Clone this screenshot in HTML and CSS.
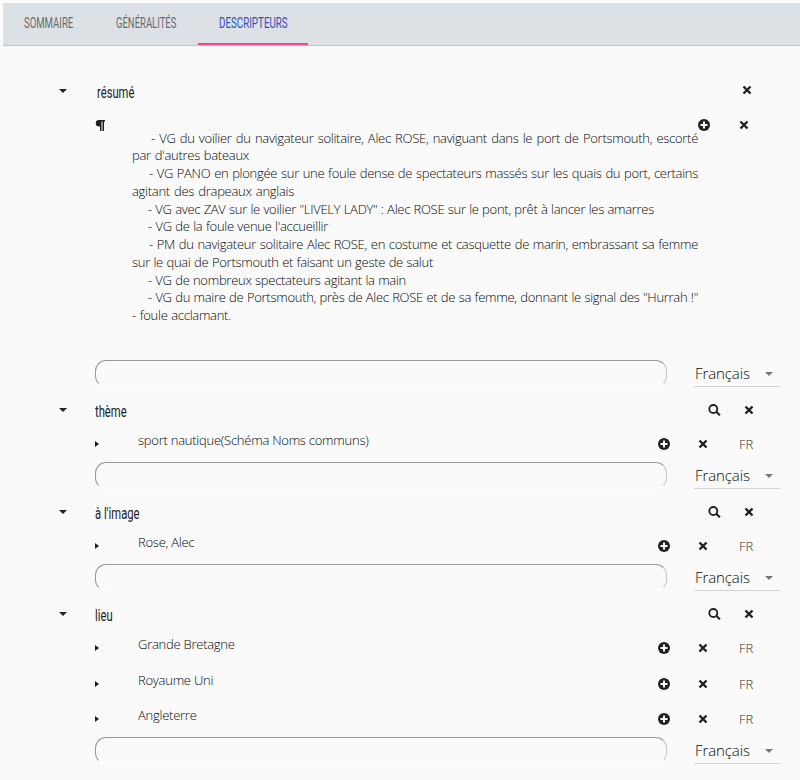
FILE: index.html
```
<!DOCTYPE html>
<html lang="fr">
<head>
<meta charset="utf-8">
<title>Descripteurs</title>
<link rel="stylesheet" href="styles.css">
</head>
<body>
<svg class="defs" aria-hidden="true">
  <symbol id="close" viewBox="0 0 10 10"><path d="M1.500 1.500l7 7M8.500 1.500l-7 7" fill="none" stroke="#212121" stroke-width="2.400"/></symbol>
  <symbol id="plus" viewBox="0 0 12 12"><circle cx="6" cy="6" r="6" fill="#212121"/><path d="M6 2.500v7M2.500 6h7" stroke="#fafafa" stroke-width="2"/></symbol>
  <symbol id="search" viewBox="0 0 13 12"><circle cx="5.300" cy="5" r="4" fill="none" stroke="#212121" stroke-width="1.800"/><path d="M8.200 7.800l3.700 3.400" stroke="#212121" stroke-width="2.200"/></symbol>
  <symbol id="down" viewBox="0 0 8 4"><path d="M0 0h8L4 4z"/></symbol>
  <symbol id="right" viewBox="0 0 4 6"><path d="M0 0l4 3-4 3z"/></symbol>
</svg>
<nav class="tabs">
  <a class="tab first"><span class="c1">SOMMAIRE</span></a>
  <a class="tab second"><span class="c2">GÉNÉRALITÉS</span></a>
  <a class="tab active"><span class="c3">DESCRIPTEURS</span></a>
</nav>
<main>
  <section>
    <div class="head head-top">
      <svg class="down"><use href="#down"/></svg><h2>résumé</h2><span></span><svg class="close"><use href="#close"/></svg>
    </div>
    <div class="note">
      <svg class="pilcrow" viewBox="0 0 10 11"><path d="M4 0h6v1.500H9V11H7.500V1.500H6.500V11H5V6.500H4A3.250 3.250 0 0 1 4 0z" fill="#212121"/></svg>
      <div class="lines">
        <p class="l1">- VG du voilier du navigateur solitaire, Alec ROSE, naviguant dans le port de Portsmouth, escorté</p>
        <p class="l2">par d'autres bateaux</p>
        <p class="l3">- VG PANO en plongée sur une foule dense de spectateurs massés sur les quais du port, certains</p>
        <p class="l4">agitant des drapeaux anglais</p>
        <p class="l5">- VG avec ZAV sur le voilier "LIVELY LADY" : Alec ROSE sur le pont, prêt à lancer les amarres</p>
        <p class="l6">- VG de la foule venue l'accueillir</p>
        <p class="l7">- PM du navigateur solitaire Alec ROSE, en costume et casquette de marin, embrassant sa femme</p>
        <p class="l8">sur le quai de Portsmouth et faisant un geste de salut</p>
        <p class="l9">- VG de nombreux spectateurs agitant la main</p>
        <p class="l10">- VG du maire de Portsmouth, près de Alec ROSE et de sa femme, donnant le signal des "Hurrah !"</p>
        <p class="l11">- foule acclamant.</p>
      </div>
      <svg class="plus"><use href="#plus"/></svg><svg class="close"><use href="#close"/></svg>
    </div>
    <div class="entry"><div class="field"></div><div class="select"><span>Français</span><svg class="down"><use href="#down"/></svg></div></div>
  </section>
  <section>
    <div class="head"><svg class="down"><use href="#down"/></svg><h2>thème</h2><svg class="search"><use href="#search"/></svg><svg class="close"><use href="#close"/></svg></div>
    <div class="item"><svg class="right"><use href="#right"/></svg><p>sport nautique(Schéma Noms communs)</p><svg class="plus"><use href="#plus"/></svg><svg class="close"><use href="#close"/></svg><span class="lang">FR</span></div>
    <div class="entry"><div class="field"></div><div class="select"><span>Français</span><svg class="down"><use href="#down"/></svg></div></div>
  </section>
  <section>
    <div class="head"><svg class="down"><use href="#down"/></svg><h2>à l'image</h2><svg class="search"><use href="#search"/></svg><svg class="close"><use href="#close"/></svg></div>
    <div class="item"><svg class="right"><use href="#right"/></svg><p>Rose, Alec</p><svg class="plus"><use href="#plus"/></svg><svg class="close"><use href="#close"/></svg><span class="lang">FR</span></div>
    <div class="entry"><div class="field"></div><div class="select"><span>Français</span><svg class="down"><use href="#down"/></svg></div></div>
  </section>
  <section>
    <div class="head"><svg class="down"><use href="#down"/></svg><h2>lieu</h2><svg class="search"><use href="#search"/></svg><svg class="close"><use href="#close"/></svg></div>
    <div class="item"><svg class="right"><use href="#right"/></svg><p>Grande Bretagne</p><svg class="plus"><use href="#plus"/></svg><svg class="close"><use href="#close"/></svg><span class="lang">FR</span></div>
    <div class="item"><svg class="right"><use href="#right"/></svg><p>Royaume Uni</p><svg class="plus"><use href="#plus"/></svg><svg class="close"><use href="#close"/></svg><span class="lang">FR</span></div>
    <div class="item"><svg class="right"><use href="#right"/></svg><p>Angleterre</p><svg class="plus"><use href="#plus"/></svg><svg class="close"><use href="#close"/></svg><span class="lang">FR</span></div>
    <div class="entry"><div class="field"></div><div class="select"><span>Français</span><svg class="down"><use href="#down"/></svg></div></div>
  </section>
</main>
</body>
</html>
```
FILE: styles.css
```
* { box-sizing: border-box; }
body { margin: 0; padding: 3px 0 0 3px; height: 780px; overflow: hidden; background: #fafafa; color: #080808; font-family: "Open Sans", sans-serif; font-size: 13px; font-weight: 300; }
.defs { display: none; }
svg { display: block; }
p, h2 { margin: 0; white-space: nowrap; }

.tabs { display: flex; height: 43px; background: #dce1e5; border-bottom: 1px solid #bcc4cb; }
.tab { height: 42px; line-height: 42px; font-size: 14.500px; font-weight: 400; font-family: "Roboto", sans-serif; color: #686c6c; }
.tab span { display: inline-block; transform-origin: left center; white-space: nowrap; }
.first { width: 92px; padding-left: 21px; }
.second { width: 103px; padding-left: 21px; }
.active { width: 110px; padding-left: 21px; color: #354fb8; border-bottom: 2px solid #ff4081; }
.c1 { transform: scaleX(.66); }
.c2 { transform: scaleX(.655); }
.c3 { transform: scaleX(.675); }

main { margin-left: -3px; }
.head { display: grid; grid-template-columns: 36px 613px 35px 10px; height: 39.500px; padding: 7px 0 0 59px; align-items: center; }
.head-top { height: 73px; padding-top: 16px; grid-template-columns: 38px 611px 34px 10px; }
.head .down { width: 8px; height: 4px; fill: #212121; }
.head h2 { justify-self: start; font-family: "Roboto", sans-serif; font-size: 17px; font-weight: 400; line-height: 22px; transform: scaleX(.66); transform-origin: left center; padding-top: 2px; color: #222; }
.close { width: 10px; height: 10px; }
.head .close { margin-left: 1px; }
.head-top .close { margin-left: 0; margin-top: -1px; }
.search { width: 13px; height: 12px; }
.plus { width: 12px; height: 12px; }
.right { width: 4px; height: 6px; fill: #212121; }

.note { display: grid; grid-template-columns: 37px 566px 41px 10px; height: 241px; padding-left: 95px; align-items: start; }
.pilcrow { width: 10px; height: 11px; margin-top: 1px; }
.note .close { margin-top: 1px; }
.lines { padding-top: 10.500px; }
.lines p { height: 17.750px; line-height: 17.750px; text-align-last: justify; letter-spacing: -.28px; }
.l1 { margin-left: 19px; width: 547px; }
.l2 { width: 117px; }
.l3 { margin-left: 17px; width: 549px; }
.l4 { width: 162px; }
.l5 { margin-left: 16px; width: 506px; }
.l6 { margin-left: 16px; width: 180px; }
.l7 { margin-left: 17px; width: 549px; }
.l8 { width: 301px; }
.l9 { margin-left: 16px; width: 258px; }
.l10 { margin-left: 16px; width: 550px; }
.l11 { width: 99px; }

.item { display: grid; grid-template-columns: 43px 520px 40px 41px 20px; height: 35.500px; padding-left: 95px; align-items: center; }
.item p { padding-bottom: 8px; line-height: 18px; letter-spacing: -.25px; }
.lang { font-size: 13px; color: #333; }

.entry { display: flex; height: 27px; padding-left: 95px; }
.field { width: 572px; border: 1px solid #c8c8c8; border-top-color: #999; border-left-color: #999; border-bottom-color: #fff; border-radius: 11px; }
.select { display: flex; justify-content: space-between; align-items: center; width: 86px; margin-left: 27px; padding: 0 7px 0 1px; border-bottom: 1px solid #d5d5d5; font-size: 15px; letter-spacing: -.1px; }
.select .down { width: 8px; height: 4px; fill: #777; margin-top: 1px; }
```
